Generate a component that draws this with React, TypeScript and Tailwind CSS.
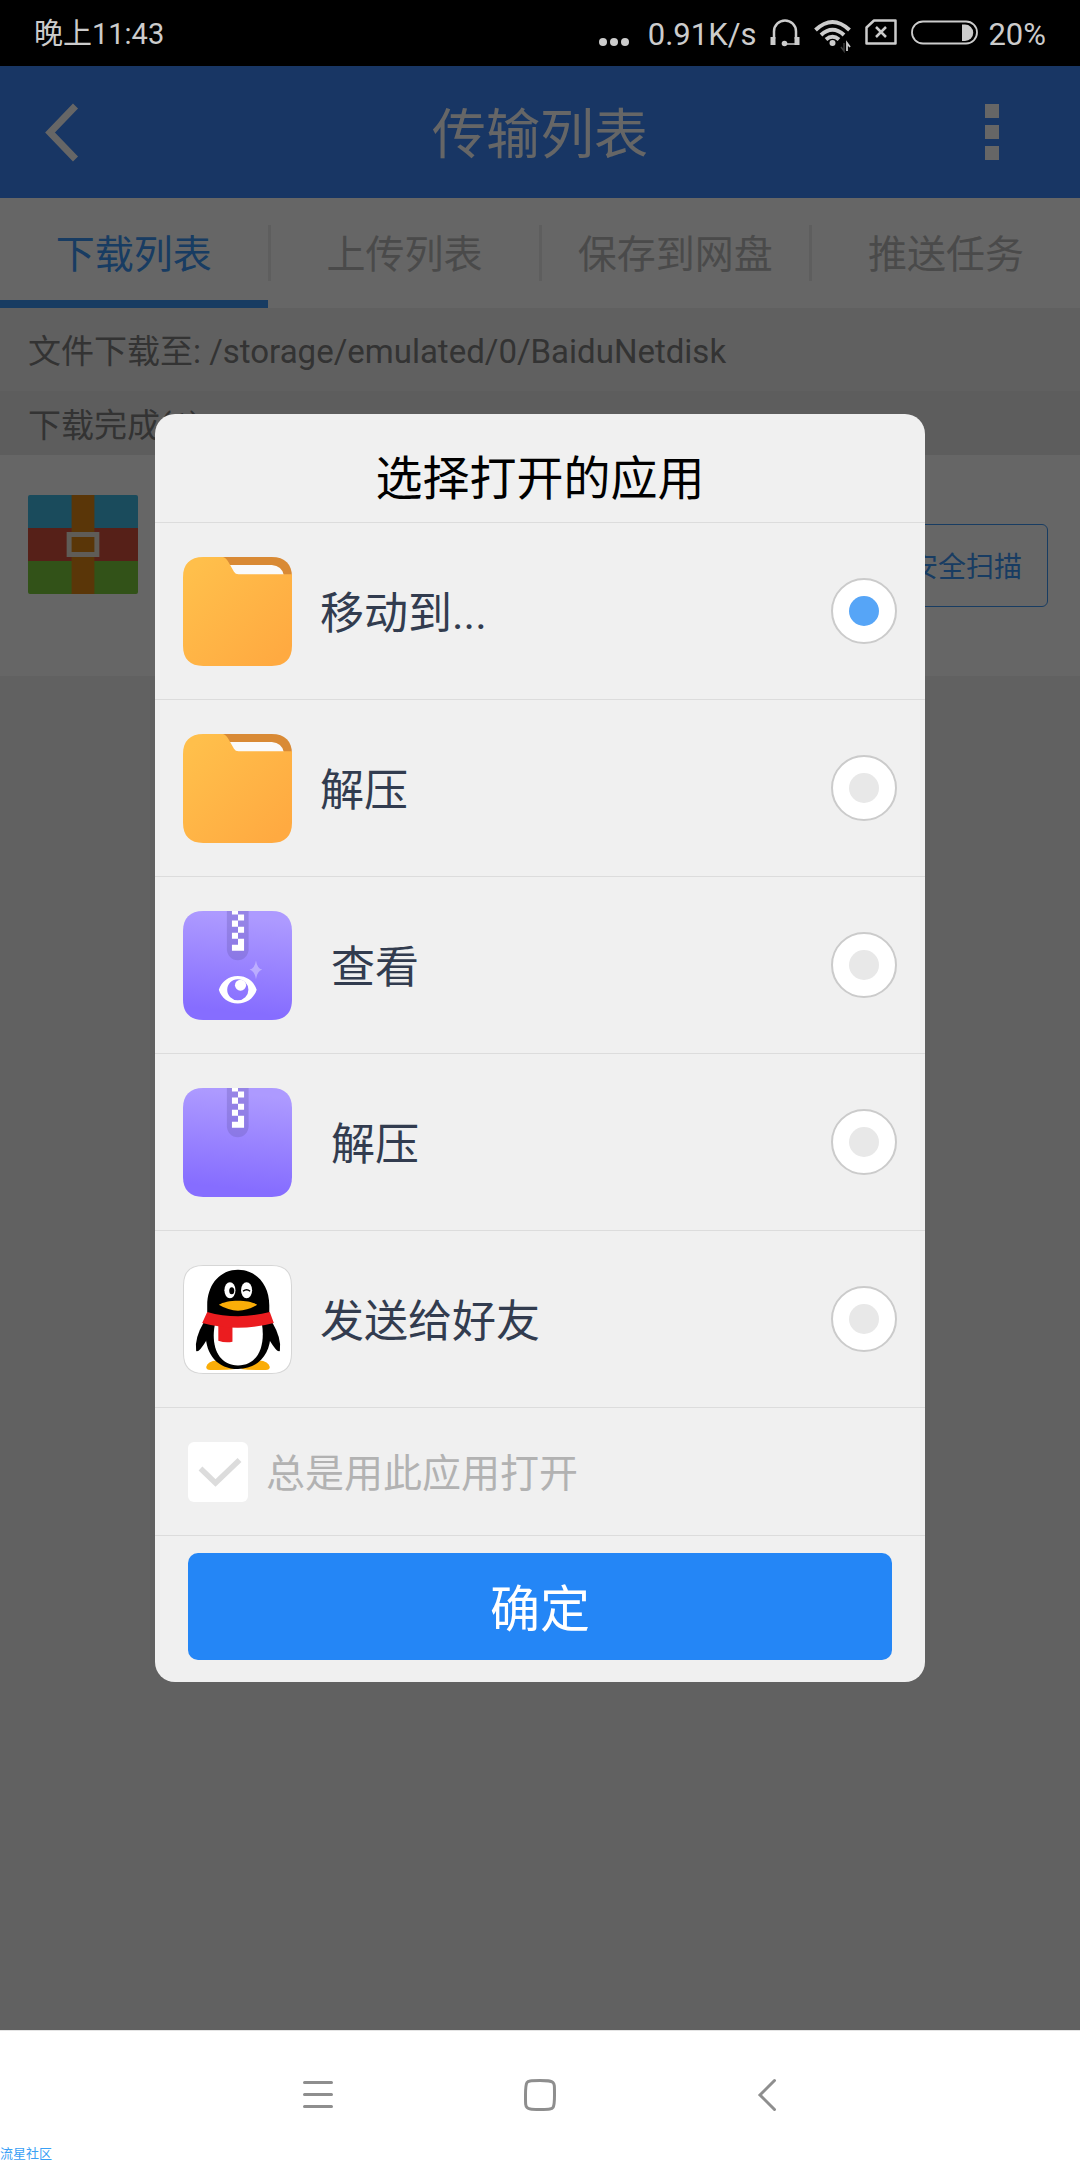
import React, { useState } from 'react';

type AppIcon = 'folder' | 'zipView' | 'zip' | 'qq';

const tabs = ['下载列表', '上传列表', '保存到网盘', '推送任务'];

const openers: { id: string; label: string; icon: AppIcon }[] = [
  { id: 'move', label: '移动到...', icon: 'folder' },
  { id: 'extract', label: '解压', icon: 'folder' },
  { id: 'zip-view', label: '\u00a0查看', icon: 'zipView' },
  { id: 'zip-extract', label: '\u00a0解压', icon: 'zip' },
  { id: 'qq', label: '发送给好友', icon: 'qq' },
];

const FolderIcon = () => (
  <svg className="size-[109px] shrink-0" viewBox="0 0 108 108" aria-hidden="true">
    <defs>
      <linearGradient id="folder" x1="0" y1="0" x2="1" y2="1">
        <stop offset="0.1" stopColor="#ffbf4b" />
        <stop offset="0.9" stopColor="#ffaa41" />
      </linearGradient>
    </defs>
    <path d="M30 0H88C101 0 108 7 108 20V50H30Z" fill="#d98a35" />
    <path d="M40 8H88Q98 9 100 18H40Z" fill="#fafafa" />
    <path
      d="M20 0H39Q42 0 45 5L50.500 14.500Q52 17 55 17H108V88C108 101 101 108 88 108H20C7 108 0 101 0 88V20C0 7 7 0 20 0Z"
      fill="url(#folder)"
    />
  </svg>
);

const ZipIcon: React.FC<{ withEye?: boolean }> = ({ withEye }) => (
  <svg className="size-[109px] shrink-0" viewBox="0 0 108 108" aria-hidden="true">
    <defs>
      <linearGradient id="zip" x1="0.55" y1="0" x2="0.45" y2="1">
        <stop offset="0.05" stopColor="#ad9aff" />
        <stop offset="0.92" stopColor="#866dff" />
      </linearGradient>
    </defs>
    <path
      d="M20 0H88C101 0 108 7 108 20V88C108 101 101 108 88 108H20C7 108 0 101 0 88V20C0 7 7 0 20 0Z"
      fill="url(#zip)"
    />
    <path d="M43.500 0H65V38A10.750 10.750 0 0 1 43.500 38Z" fill="#6e5fb8" opacity="0.35" />
    <path
      d="M48.500 0h6v3.500h-6zM54.500 3.500h6v6h-6zM48.500 9.500h6v6h-6zM54.500 15.500h6v6h-6zM48.500 21.500h6v6h-6zM54.500 27.500h6v12h-12v-6h6z"
      fill="#fff"
    />
    {withEye && (
      <>
        <path
          fillRule="evenodd"
          d="M35.500 78C38 70 45 64.300 54.300 64.300S70.500 70 73 78C70.500 86 63.600 91.700 54.300 91.700S38 86 35.500 78ZM43.800 78a10.500 10.500 0 1 0 21 0a10.500 10.500 0 1 0 -21 0Z"
          fill="#fff"
        />
        <circle cx="57" cy="73.500" r="5.500" fill="#fff" />
        <path
          d="M72.300 49Q73.500 57 78.500 58Q73.500 59.500 72.300 67.500Q71 59.500 66 58Q71 57 72.300 49Z"
          fill="#fff"
          opacity="0.35"
        />
      </>
    )}
  </svg>
);

const QQIcon = () => (
  <svg className="size-[109px] shrink-0" viewBox="0 0 108 108" aria-hidden="true">
    <path
      d="M20 .5H88C101 .5 107.500 7 107.500 20V88C107.500 101 101 107.500 88 107.500H20C7 107.500 .5 101 .5 88V20C.5 7 7 .5 20 .5Z"
      fill="#fff"
      stroke="#d6d6d6"
    />
    {/* feet */}
    <path d="M23 101Q24 95 34 94.500L52 103Q42 104.500 27 104Q23 104 23 101Z" fill="#faad08" />
    <path d="M86 101Q85 95 75 94.500L57 103Q67 104.500 82 104Q86 104 86 101Z" fill="#faad08" />
    {/* wings */}
    <path d="M21 56Q11 73 13 85Q15 88 23 75L30 62Z" fill="#000" />
    <path d="M88 56Q98 73 96 85Q94 88 86 75L79 62Z" fill="#000" />
    {/* body */}
    <path
      d="M54.500 4.700C37 4.700 24 19 24 40V55C18 82 30 103 54.500 103S91 82 85.500 55V40C85.500 19 72 4.700 54.500 4.700Z"
      fill="#000"
    />
    <path d="M32 57C27 79 34 99.500 54.500 99.500S82 79 78 57Z" fill="#fff" />
    {/* scarf */}
    <path d="M35 59V75Q42 77.500 49 76V60Z" fill="#eb1c1f" />
    <path d="M24 46.500Q54 55 86 46.500L90 57.500Q54 67 19 57.500Z" fill="#eb1c1f" />
    {/* face */}
    <ellipse cx="46.500" cy="25" rx="5.500" ry="8" fill="#fff" />
    <ellipse cx="63" cy="25" rx="5.500" ry="8" fill="#fff" />
    <ellipse cx="48.300" cy="25.500" rx="2.500" ry="3.500" fill="#000" />
    <path d="M59.500 26Q63 23 66.500 26" fill="none" stroke="#000" strokeWidth="1.500" />
    <path d="M35.500 39.500C43 34 66 34 73.500 39.500Q54.500 51 35.500 39.500Z" fill="#faad08" />
  </svg>
);

const OpenerIcon: React.FC<{ icon: AppIcon }> = ({ icon }) => {
  if (icon === 'folder') return <FolderIcon />;
  if (icon === 'qq') return <QQIcon />;
  return <ZipIcon withEye={icon === 'zipView'} />;
};

const StatusBar = () => (
  <div className="flex h-[66px] shrink-0 items-center justify-between bg-black px-[34px] text-[#ccc]">
    <span className="pt-0.5 text-[29px]">晚上11:43</span>

    <div className="flex items-center gap-3.5 text-[31px]">
      <svg className="h-[40px] w-[36px]" viewBox="0 0 36 40" fill="currentColor" aria-hidden="true">
        <circle cx="5" cy="29" r="4" />
        <circle cx="16" cy="29" r="4" />
        <circle cx="27" cy="29" r="4" />
      </svg>
      <span className="pt-0.5">0.91K/s</span>

      {/* Headset */}
      <svg className="h-[40px] w-[30px]" viewBox="0 0 30 40" fill="none" stroke="currentColor" aria-hidden="true">
        <path d="M4 26V18.500A11 11 0 0 1 26 18.500V26" strokeWidth="2.500" />
        <path d="M3 24V32M27 24V32" strokeWidth="5" />
        <path d="M15 31H26" strokeWidth="1.500" />
        <circle cx="14.500" cy="30.500" r="2.800" fill="currentColor" stroke="none" />
      </svg>

      {/* Wifi */}
      <svg className="h-[40px] w-[37px]" viewBox="0 0 37 40" fill="none" stroke="currentColor" aria-hidden="true">
        <path d="M1.500 17Q18.500 1 35.500 17" strokeWidth="4" />
        <path d="M7 22Q18.500 11.500 30 22" strokeWidth="4" />
        <path d="M12 26.500Q18.500 21 25 26.500" strokeWidth="4" />
        <circle cx="18.500" cy="30" r="3" fill="currentColor" stroke="none" />
        <path d="M33 38V30L36 34" strokeWidth="1.800" />
        <path d="M30 30V38L27 34" strokeWidth="1.500" opacity="0.3" />
      </svg>

      {/* No SIM */}
      <svg className="h-[40px] w-[32px]" viewBox="0 0 32 40" fill="none" stroke="currentColor" aria-hidden="true">
        <path d="M9 7.500H30.500V30.500H1.500V14.500Z" strokeWidth="2.500" strokeLinejoin="round" />
        <path d="M11 14L21 24M21 14L11 24" strokeWidth="2.500" />
      </svg>

      <div className="flex items-center gap-2.5">
        <svg className="h-[40px] w-[67px]" viewBox="0 0 67 40" fill="none" aria-hidden="true">
          <rect x="1" y="8.500" width="65" height="22" rx="11" stroke="currentColor" strokeWidth="1.800" />
          <path d="M51 11.500H54A8.250 8.250 0 0 1 54 28H51Z" fill="currentColor" />
        </svg>
        <span className="pt-0.5">20%</span>
      </div>
    </div>
  </div>
);

const TransferPage = () => (
  <>
    <header className="flex h-[132px] items-center justify-between bg-[#3c87fa] px-10 text-white">
      <button type="button" aria-label="返回" className="w-24">
        <svg className="h-[60px] w-[44px]" viewBox="0 0 44 60" fill="none" stroke="currentColor" aria-hidden="true">
          <path d="M35.500 4L10 30.500L35.500 57" strokeWidth="7" />
        </svg>
      </button>
      <h1 className="pt-2 text-[54px]">传输列表</h1>
      <button type="button" aria-label="更多" className="flex w-24 flex-col items-center gap-[7px]">
        <span className="size-3.5 bg-white" />
        <span className="size-3.5 bg-white" />
        <span className="size-3.5 bg-white" />
      </button>
    </header>

    <nav className="flex h-[110px] items-stretch bg-white text-[39px] text-[#b9b9b9]">
      {tabs.map((tab, index) => (
        <React.Fragment key={tab}>
          {index > 0 && <span className="h-14 w-[3px] self-center bg-[#ebebeb]" />}
          <button
            type="button"
            className={
              index === 0
                ? 'flex-1 border-y-8 border-t-transparent border-b-[#3c96f5] pt-1 text-[#3c96f5]'
                : 'flex-1 pt-1'
            }
          >
            {tab}
          </button>
        </React.Fragment>
      ))}
    </nav>

    <p className="flex h-[83px] items-center bg-[#f0f0f0] px-7 pt-1 text-[33px] text-[#808080]">
      文件下载至: /storage/emulated/0/BaiduNetdisk
    </p>
    <h2 className="flex h-[64px] items-center bg-[#e8e8e8] px-7 pt-1 text-[33px] text-[#808080]">
      下载完成(1)
    </h2>

    <div className="flex h-[221px] items-center justify-between bg-white pr-8 pl-7">
      <svg className="mt-10 h-[99px] w-[110px] self-start" viewBox="0 0 111 99" preserveAspectRatio="none" aria-hidden="true">
        <path d="M0 33V2Q0 0 2 0H109Q111 0 111 2V33Z" fill="#41bbe6" />
        <path d="M0 33H111V66H0Z" fill="#d7503c" />
        <path d="M0 66H111V97Q111 99 109 99H2Q0 99 0 97Z" fill="#7dcd3c" />
        <path d="M44 0H67V99H44Z" fill="#e18714" />
        <rect x="41.500" y="39.500" width="28" height="20" fill="#e18714" stroke="#eee6da" strokeWidth="5" />
      </svg>
      <button
        type="button"
        className="h-[83px] rounded-md border border-[#3c96f5] px-[25px] pt-1 text-[28px] text-[#3c96f5]"
      >
        安全扫描
      </button>
    </div>
  </>
);

const OpenWithDialog = () => {
  const [selected, setSelected] = useState('move');
  const [always, setAlways] = useState(false);

  return (
    <form
      role="dialog"
      aria-labelledby="open-with-title"
      onSubmit={e => e.preventDefault()}
      className="w-full max-w-[770px] overflow-hidden rounded-[20px] bg-[#f0f0f0]"
    >
      <h2
        id="open-with-title"
        className="flex h-[109px] items-center justify-center border-b border-[#dcdcdc] pt-5 text-[47px] text-black"
      >
        选择打开的应用
      </h2>

      {openers.map(opener => (
        <label
          key={opener.id}
          className="flex h-[177px] items-center border-b border-[#dcdcdc] px-7 text-[44px] text-[#323c4f]"
        >
          <OpenerIcon icon={opener.icon} />
          <span className="ml-7 flex-1 pt-1.5">{opener.label}</span>
          <input
            type="radio"
            name="opener"
            value={opener.id}
            checked={selected === opener.id}
            onChange={() => setSelected(opener.id)}
            className="grid size-[66px] appearance-none place-content-center rounded-full border-2 border-[#cbcbcb] bg-white before:size-[30px] before:rounded-full before:bg-[#e8e8e8] before:content-[''] checked:before:bg-[#56a5f7]"
          />
        </label>
      ))}

      <label className="flex h-[128px] items-center gap-[18px] border-b border-[#dcdcdc] px-[33px] text-[39px] text-[#b2b2b2]">
        <span className="relative flex">
          <input
            type="checkbox"
            checked={always}
            onChange={e => setAlways(e.target.checked)}
            className="peer size-[60px] appearance-none rounded-md bg-white"
          />
          <svg
            className="pointer-events-none absolute inset-0 size-full text-[#dcdcdc] peer-checked:text-[#56a5f7]"
            viewBox="0 0 60 60"
            fill="none"
            stroke="currentColor"
            aria-hidden="true"
          >
            <path d="M12.500 26.500L27.500 41L51.500 18" strokeWidth="5.500" />
          </svg>
        </span>
        <span className="pt-1.5">总是用此应用打开</span>
      </label>

      <div className="px-[33px] pt-[17px] pb-[22px]">
        <button
          type="submit"
          className="h-[107px] w-full rounded-[10px] bg-[#2486f6] pt-1.5 text-[50px] text-white"
        >
          确定
        </button>
      </div>
    </form>
  );
};

const NavigationBar = () => (
  <nav className="relative flex h-[130px] shrink-0 items-center justify-center gap-36 border-t border-[#e4e4e4] bg-white text-[#8e8e8e]">
    <button type="button" aria-label="菜单" className="flex w-20 justify-center">
      <svg className="size-9" viewBox="0 0 36 36" fill="none" stroke="currentColor" aria-hidden="true">
        <path d="M6.500 4.500H33.500M6.500 16.500H33.500M6.500 28.500H33.500" strokeWidth="3" strokeLinecap="round" />
      </svg>
    </button>
    <button type="button" aria-label="主页" className="flex w-20 justify-center">
      <svg className="size-9" viewBox="0 0 36 36" fill="none" stroke="currentColor" aria-hidden="true">
        <path
          d="M18 2.500C28 2.500 29.500 3 31 4.500S32.500 7 32.500 17S32 28 31 29.500S28 31.500 18 31.500S6.500 31 5 29.500S3.500 27 3.500 17S4 6 5 4.500S8 2.500 18 2.500Z"
          strokeWidth="3"
        />
      </svg>
    </button>
    <button type="button" aria-label="返回" className="flex w-20 justify-center">
      <svg className="size-9" viewBox="0 0 36 36" fill="none" stroke="currentColor" aria-hidden="true">
        <path d="M28.500 2.500L14 17L28.500 31.500" strokeWidth="3" strokeLinecap="round" />
      </svg>
    </button>
    <span className="absolute bottom-0 left-0 text-[13px] leading-3 text-[#3aa0f5]">流星社区</span>
  </nav>
);

const App: React.FC = () => (
  <div className="flex min-h-screen flex-col bg-white font-['Roboto','Noto_Sans_CJK_SC',sans-serif] leading-none">
    <StatusBar />
    <main className="relative flex-1 bg-[#f3f3f3]">
      <TransferPage />
      <div className="absolute inset-0 flex items-center justify-center bg-black/60">
        <OpenWithDialog />
      </div>
    </main>
    <NavigationBar />
  </div>
);

export default App;
